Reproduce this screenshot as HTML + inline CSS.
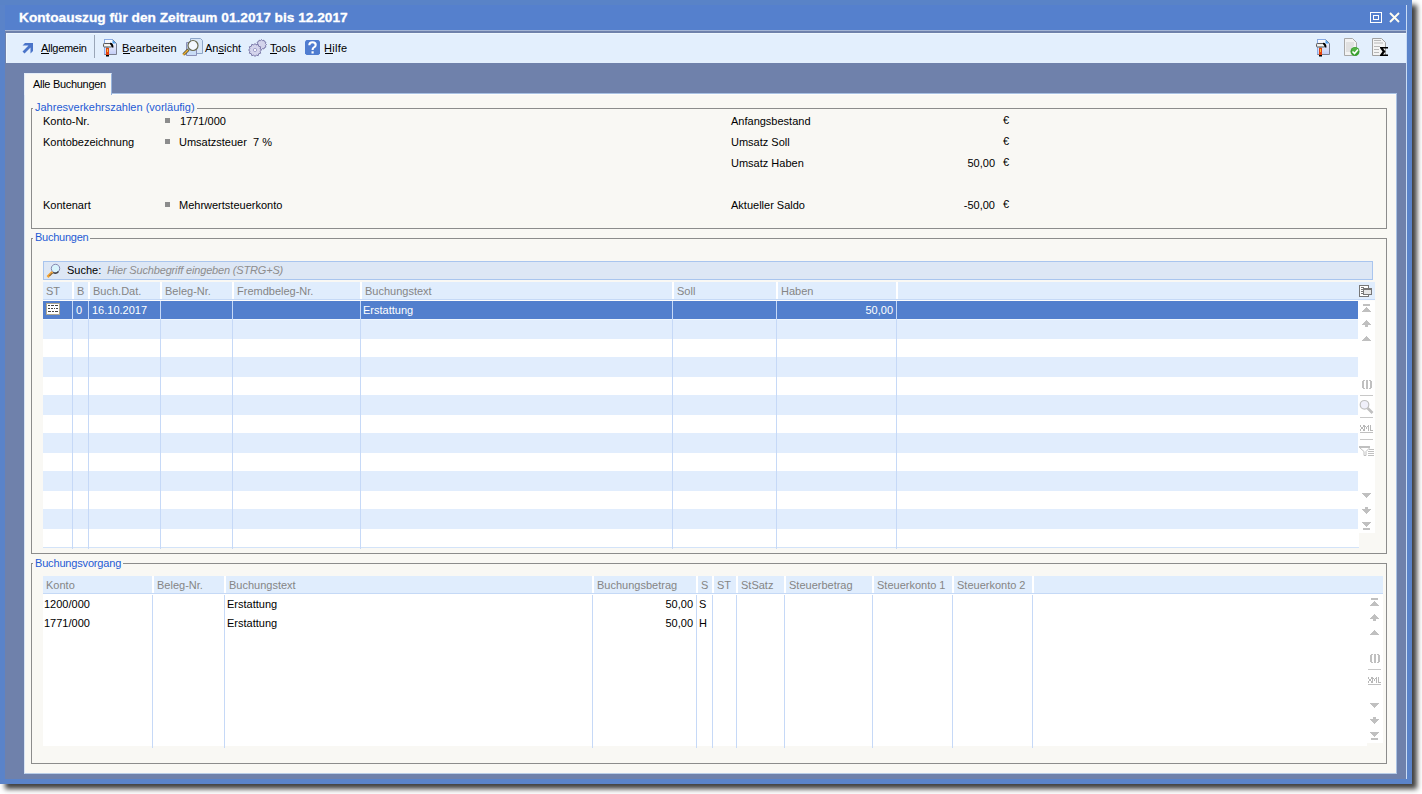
<!DOCTYPE html>
<html><head><meta charset="utf-8">
<style>
*{margin:0;padding:0;box-sizing:border-box}
html,body{width:1422px;height:794px;overflow:hidden;background:#fff;font-family:"Liberation Sans",sans-serif;font-size:11px;color:#000}
.a{position:absolute}
.t{position:absolute;white-space:pre;line-height:13px;margin-top:1px}
#win{left:0;top:0;width:1412px;height:784px;background:#5a83c9;box-shadow:5px 5px 5px rgba(0,0,0,.75)}
#topband{left:0;top:0;width:1412px;height:5px;background:#5983c7}
#title{left:5px;top:5px;width:1401px;height:25px;background:#5580cd}
#titletext{left:19px;top:9px;font-weight:bold;font-size:13.7px;color:#fff;line-height:16px;-webkit-text-stroke:0.3px #fff}
#tline1{left:5px;top:30px;width:1401px;height:1px;background:#a3b4d4}
#tline2{left:5px;top:31px;width:1401px;height:2px;background:#6f81ab}
#toolbar{left:5px;top:33px;width:1401px;height:30px;background:#e3effd;border-left:1px solid #6f81ab;box-shadow:inset 1px 1px 0 #eef7fe}
#client{left:5px;top:63px;width:1401px;height:716px;background:#6f81ab}
#rline{left:1406px;top:5px;width:1px;height:774px;background:#c9dcf6}
.u{text-decoration:underline}
#tab{left:24px;top:73px;width:88px;height:22px;background:#f9f8f4;border-left:1px solid #e4edf8;border-top:1px solid #e4edf8;border-right:1px solid #98b4dc}
#panel{left:24px;top:93px;width:1373px;height:681px;background:#f9f8f4;border-left:1px solid #d8e4f4;border-bottom:1px solid #b9cde8;border-top:1px solid #a9c1e3;border-right:1px solid #a9c1e3;box-shadow:inset 0 1px 0 #fdfdfb}
.gb{position:absolute;border:1px solid #8c8c8c}
.leg{position:absolute;color:#1f5bd4;background:#f9f8f4;padding:0 2px;line-height:13px;margin-top:1px;letter-spacing:-0.25px}
.hd{color:#858585}
.sq{position:absolute;width:5px;height:5px;background:#8c8c8c}
</style></head><body>
<div id="win" class="a"></div>
<div id="topband" class="a"></div>
<div id="title" class="a"></div>
<div id="titletext" class="t">Kontoauszug für den Zeitraum 01.2017 bis 12.2017</div>
<div id="tline1" class="a"></div>
<div id="tline2" class="a"></div>
<div id="toolbar" class="a"></div>
<div id="client" class="a"></div>
<div id="rline" class="a"></div>

<!-- toolbar items -->
<div class="t" style="left:41px;top:41px;letter-spacing:-0.3px">Allgemein</div>
<div class="a" style="left:94px;top:35px;width:1px;height:23px;background:#9aa6b8"></div>
<div class="t" style="left:122px;top:41px;letter-spacing:0.15px">Bearbeiten</div>
<div class="t" style="left:205px;top:41px">Ansicht</div>
<div class="t" style="left:270px;top:41px">Tools</div>
<div class="t" style="left:324px;top:41px;letter-spacing:0.3px">Hilfe</div>

<div id="panel" class="a"></div>
<div id="tab" class="a"></div>
<div class="t" style="left:33px;top:77px;letter-spacing:-0.3px">Alle Buchungen</div>

<!-- group 1 -->
<div class="gb" style="left:31px;top:108px;width:1356px;height:121px"></div>
<div class="leg" style="left:33px;top:100px;letter-spacing:0">Jahresverkehrszahlen (vorläufig)</div>


<div class="t" style="left:43px;top:114px">Konto-Nr.</div>
<div class="t" style="left:43px;top:135px">Kontobezeichnung</div>
<div class="t" style="left:43px;top:198px">Kontenart</div>
<div class="sq" style="left:165px;top:118px"></div>
<div class="sq" style="left:165px;top:139px"></div>
<div class="sq" style="left:165px;top:202px"></div>
<div class="t" style="left:180px;top:114px">1771/000</div>
<div class="t" style="left:179px;top:135px">Umsatzsteuer  7 %</div>
<div class="t" style="left:179px;top:198px">Mehrwertsteuerkonto</div>
<div class="t" style="left:731px;top:114px">Anfangsbestand</div>
<div class="t" style="left:731px;top:135px">Umsatz Soll</div>
<div class="t" style="left:731px;top:156px">Umsatz Haben</div>
<div class="t" style="left:731px;top:198px">Aktueller Saldo</div>
<div class="t" style="left:1003px;top:113px">€</div>
<div class="t" style="left:1003px;top:134px">€</div>
<div class="t" style="left:1003px;top:155px">€</div>
<div class="t" style="left:1003px;top:197px">€</div>
<div class="t" style="right:427px;top:156px">50,00</div>
<div class="t" style="right:427px;top:198px">-50,00</div>

<!-- group 2 -->
<div class="gb" style="left:31px;top:238px;width:1356px;height:316px"></div>
<div class="leg" style="left:33px;top:230px">Buchungen</div>
<div class="a" style="left:43px;top:261px;width:1330px;height:19px;background:#dde7f5;border:1px solid #a9c5ee"></div>
<div class="t" style="left:67px;top:263px">Suche:</div>
<div class="t" style="left:107px;top:263px;font-style:italic;color:#8d8d8d;letter-spacing:-0.17px">Hier Suchbegriff eingeben (STRG+S)</div>


<div class="a" style="left:43px;top:282px;width:1332px;height:17px;background:#e0edfd"></div>
<div class="a" style="left:43px;top:299px;width:1332px;height:1px;background:#c5d9f6"></div>
<div class="a" style="left:43px;top:300px;width:1332px;height:1px;background:#fdfdfd"></div>
<div class="a" style="left:43px;top:301px;width:1316px;height:246px;background:#fff"></div>
<div class="a" style="left:1358px;top:301px;width:17px;height:232px;background:#fff"></div>
<div class="a" style="left:43px;top:301px;width:1315px;height:18px;background:#527fcd"></div>
<div class="a" style="left:43px;top:319px;width:1315px;height:20px;background:#e1edfd"></div>
<div class="a" style="left:43px;top:357px;width:1315px;height:20px;background:#e1edfd"></div>
<div class="a" style="left:43px;top:395px;width:1315px;height:20px;background:#e1edfd"></div>
<div class="a" style="left:43px;top:433px;width:1315px;height:20px;background:#e1edfd"></div>
<div class="a" style="left:43px;top:471px;width:1315px;height:20px;background:#e1edfd"></div>
<div class="a" style="left:43px;top:509px;width:1315px;height:20px;background:#e1edfd"></div>
<div class="a" style="left:43px;top:319px;width:1315px;height:1px;background:#eef6fe"></div>
<div class="a" style="left:43px;top:547px;width:1316px;height:1px;background:#d3e3f8"></div>
<div class="a" style="left:72px;top:282px;width:2px;height:17px;background:#fff"></div>
<div class="a" style="left:72px;top:301px;width:1px;height:248px;background:#c6d9f7"></div>
<div class="a" style="left:88px;top:282px;width:2px;height:17px;background:#fff"></div>
<div class="a" style="left:88px;top:301px;width:1px;height:248px;background:#c6d9f7"></div>
<div class="a" style="left:160px;top:282px;width:2px;height:17px;background:#fff"></div>
<div class="a" style="left:160px;top:301px;width:1px;height:248px;background:#c6d9f7"></div>
<div class="a" style="left:232px;top:282px;width:2px;height:17px;background:#fff"></div>
<div class="a" style="left:232px;top:301px;width:1px;height:248px;background:#c6d9f7"></div>
<div class="a" style="left:360px;top:282px;width:2px;height:17px;background:#fff"></div>
<div class="a" style="left:360px;top:301px;width:1px;height:248px;background:#c6d9f7"></div>
<div class="a" style="left:672px;top:282px;width:2px;height:17px;background:#fff"></div>
<div class="a" style="left:672px;top:301px;width:1px;height:248px;background:#c6d9f7"></div>
<div class="a" style="left:776px;top:282px;width:2px;height:17px;background:#fff"></div>
<div class="a" style="left:776px;top:301px;width:1px;height:248px;background:#c6d9f7"></div>
<div class="a" style="left:896px;top:282px;width:2px;height:17px;background:#fff"></div>
<div class="a" style="left:896px;top:301px;width:1px;height:248px;background:#c6d9f7"></div>
<div class="t hd" style="left:46px;top:284px">ST</div>
<div class="t hd" style="left:77px;top:284px">B</div>
<div class="t hd" style="left:93px;top:284px">Buch.Dat.</div>
<div class="t hd" style="left:165px;top:284px">Beleg-Nr.</div>
<div class="t hd" style="left:237px;top:284px">Fremdbeleg-Nr.</div>
<div class="t hd" style="left:365px;top:284px">Buchungstext</div>
<div class="t hd" style="left:677px;top:284px">Soll</div>
<div class="t hd" style="left:781px;top:284px">Haben</div>
<div class="t" style="left:76px;top:303px;color:#fff">0</div>
<div class="t" style="left:92px;top:303px;color:#fff">16.10.2017</div>
<div class="t" style="left:363px;top:303px;color:#fff">Erstattung</div>
<div class="t" style="right:529px;top:303px;color:#fff">50,00</div>
<div class="gb" style="left:31px;top:563px;width:1356px;height:201px"></div>
<div class="leg" style="left:33px;top:556px;letter-spacing:-0.17px">Buchungsvorgang</div>
<div class="a" style="left:43px;top:576px;width:1340px;height:17px;background:#e0edfd"></div>
<div class="a" style="left:43px;top:593px;width:1340px;height:1px;background:#c5d9f6"></div>
<div class="a" style="left:43px;top:594px;width:1340px;height:152px;background:#fff"></div>
<div class="a" style="left:1367px;top:743px;width:16px;height:3px;background:#f9f8f4"></div>
<div class="a" style="left:152px;top:576px;width:2px;height:17px;background:#fff"></div>
<div class="a" style="left:152px;top:595px;width:1px;height:153px;background:#c6d9f7"></div>
<div class="a" style="left:224px;top:576px;width:2px;height:17px;background:#fff"></div>
<div class="a" style="left:224px;top:595px;width:1px;height:153px;background:#c6d9f7"></div>
<div class="a" style="left:592px;top:576px;width:2px;height:17px;background:#fff"></div>
<div class="a" style="left:592px;top:595px;width:1px;height:153px;background:#c6d9f7"></div>
<div class="a" style="left:696px;top:576px;width:2px;height:17px;background:#fff"></div>
<div class="a" style="left:696px;top:595px;width:1px;height:153px;background:#c6d9f7"></div>
<div class="a" style="left:712px;top:576px;width:2px;height:17px;background:#fff"></div>
<div class="a" style="left:712px;top:595px;width:1px;height:153px;background:#c6d9f7"></div>
<div class="a" style="left:736px;top:576px;width:2px;height:17px;background:#fff"></div>
<div class="a" style="left:736px;top:595px;width:1px;height:153px;background:#c6d9f7"></div>
<div class="a" style="left:784px;top:576px;width:2px;height:17px;background:#fff"></div>
<div class="a" style="left:784px;top:595px;width:1px;height:153px;background:#c6d9f7"></div>
<div class="a" style="left:872px;top:576px;width:2px;height:17px;background:#fff"></div>
<div class="a" style="left:872px;top:595px;width:1px;height:153px;background:#c6d9f7"></div>
<div class="a" style="left:952px;top:576px;width:2px;height:17px;background:#fff"></div>
<div class="a" style="left:952px;top:595px;width:1px;height:153px;background:#c6d9f7"></div>
<div class="a" style="left:1032px;top:576px;width:2px;height:17px;background:#fff"></div>
<div class="a" style="left:1032px;top:595px;width:1px;height:153px;background:#c6d9f7"></div>
<div class="t hd" style="left:46px;top:578px">Konto</div>
<div class="t hd" style="left:157px;top:578px">Beleg-Nr.</div>
<div class="t hd" style="left:229px;top:578px">Buchungstext</div>
<div class="t hd" style="left:597px;top:578px">Buchungsbetrag</div>
<div class="t hd" style="left:701px;top:578px">S</div>
<div class="t hd" style="left:717px;top:578px">ST</div>
<div class="t hd" style="left:741px;top:578px">StSatz</div>
<div class="t hd" style="left:789px;top:578px">Steuerbetrag</div>
<div class="t hd" style="left:877px;top:578px">Steuerkonto 1</div>
<div class="t hd" style="left:957px;top:578px">Steuerkonto 2</div>
<div class="t" style="left:44px;top:597px">1200/000</div>
<div class="t" style="left:227px;top:597px">Erstattung</div>
<div class="t" style="right:729px;top:597px">50,00</div>
<div class="t" style="left:699px;top:597px">S</div>
<div class="t" style="left:44px;top:616px">1771/000</div>
<div class="t" style="left:227px;top:616px">Erstattung</div>
<div class="t" style="right:729px;top:616px">50,00</div>
<div class="t" style="left:699px;top:616px">H</div>
<!-- ICONS -->
<!-- title buttons -->
<div class="a" style="left:1370px;top:12px;width:12px;height:11px;border:1px solid #fff"></div>
<div class="a" style="left:1373px;top:15px;width:6px;height:5px;border:1px solid #fff"></div>
<svg class="a" style="left:1389px;top:12px" width="11" height="11" viewBox="0 0 11 11"><path d="M1 1 L10 10 M10 1 L1 10" stroke="#fffdf0" stroke-width="1.9"/></svg>
<!-- toolbar underlines -->
<div class="a" style="left:41px;top:53px;width:8px;height:1px;background:#000"></div>
<div class="a" style="left:123px;top:53px;width:7px;height:1px;background:#000"></div>
<div class="a" style="left:218px;top:53px;width:6px;height:1px;background:#000"></div>
<div class="a" style="left:270px;top:53px;width:7px;height:1px;background:#000"></div>
<div class="a" style="left:325px;top:53px;width:8px;height:1px;background:#000"></div>
<!-- arrow -->
<svg class="a" style="left:22px;top:42px" width="12" height="12" viewBox="0 0 12 12"><path d="M3 1 H11 V9 L8.5 11.5 V5.5 L2.5 11.5 L0.5 9.5 L6.5 3.5 H0.5 Z" fill="#4a74c9"/></svg>
<!-- hammer doc -->
<svg class="a" style="left:102px;top:38px" width="16" height="19" viewBox="0 0 16 19"><defs><linearGradient id="hg1" x1="0" y1="0" x2="0" y2="1"><stop offset="0" stop-color="#fff"/><stop offset="1" stop-color="#c2ccf6"/></linearGradient></defs><path d="M2.5 1.5 H10.5 L14.5 5.5 V16.5 H2.5 Z" fill="url(#hg1)" stroke="#7a7f90"/><path d="M2.5 16 V1.5 H10.5" fill="none" stroke="#88aae6"/><path d="M10.5 2 V5.5 H14" fill="#4aa0f0"/><rect x="1.5" y="5.5" width="8" height="3.5" rx="0.8" fill="#e8e8e8" stroke="#5a5a5a"/><path d="M3 7.2 H8" stroke="#fff"/><path d="M8 5.7 Q10.6 5.7 10.6 9.6" stroke="#000" stroke-width="1.8" fill="none"/><rect x="4" y="9" width="2.5" height="1" fill="#808080"/><rect x="4" y="10" width="3" height="7" fill="#e2420e"/><rect x="5" y="11" width="1" height="3" fill="#f8c040"/><rect x="4" y="17" width="3" height="1.5" fill="#000"/></svg>
<!-- ansicht -->
<svg class="a" style="left:181px;top:37px" width="24" height="21" viewBox="0 0 24 21"><path d="M9.5 1.5 H19.5 L21.5 3.5 V16.5 H9.5 Z" fill="#d8e6f8" stroke="#8ea6c8"/><path d="M5.5 5.5 H15.5 V18.5 H5.5 Z" fill="#c8dcf6" stroke="#8a8fb8"/><circle cx="12" cy="8.5" r="5" fill="#f4f8ff" stroke="#6a6a50" stroke-width="1.2"/><path d="M7.5 12.5 L2.5 17.5" stroke="#50503a" stroke-width="3"/><path d="M7 13 L2 18" stroke="#f0b030" stroke-width="1.5"/></svg>
<!-- gears -->
<svg class="a" style="left:247px;top:38px" width="21" height="19" viewBox="0 0 21 19">
<g fill="#d4d4ec" stroke="#7c7aaa" stroke-width="1">
<path d="M14.5 1.5 l1 1.2 1.5-.5 .4 1.5 1.5.4 -.5 1.5 1.2 1 -1.2 1 .5 1.5 -1.5.4 -.4 1.5 -1.5-.5 -1 1.2 -1-1.2 -1.5.5 -.4-1.5 -1.5-.4 .5-1.5 -1.2-1 1.2-1 -.5-1.5 1.5-.4 .4-1.5 1.5.5 z"/>
<path d="M8 5.5 l1.3 1.5 1.9-.7 .5 2 2 .5 -.7 1.9 1.5 1.3 -1.5 1.3 .7 1.9 -2 .5 -.5 2 -1.9-.7 -1.3 1.5 -1.3-1.5 -1.9.7 -.5-2 -2-.5 .7-1.9 -1.5-1.3 1.5-1.3 -.7-1.9 2-.5 .5-2 1.9.7 z"/>
</g><circle cx="8" cy="12" r="1.6" fill="#fff" stroke="#9090c0" stroke-width=".8"/></svg>
<!-- help -->
<svg class="a" style="left:304px;top:39px" width="17" height="17" viewBox="0 0 17 17"><path d="M2.5 1 H14.5 L16 2.5 V14.5 L14.5 16 H2.5 L1 14.5 V2.5 Z" fill="#4f7cd0"/><path d="M5.3 6.2 Q5.3 3.2 8.5 3.2 Q11.7 3.2 11.7 5.9 Q11.7 7.6 9.6 8.6 Q8.6 9.1 8.6 11" fill="none" stroke="#fff" stroke-width="2.1"/><rect x="7.5" y="12.3" width="2.2" height="2.2" fill="#fff"/></svg>
<!-- right toolbar: hammer doc -->
<svg class="a" style="left:1315px;top:38px" width="16" height="19" viewBox="0 0 16 19"><defs><linearGradient id="hg2" x1="0" y1="0" x2="0" y2="1"><stop offset="0" stop-color="#fff"/><stop offset="1" stop-color="#c2ccf6"/></linearGradient></defs><path d="M2.5 1.5 H10.5 L14.5 5.5 V16.5 H2.5 Z" fill="url(#hg2)" stroke="#7a7f90"/><path d="M2.5 16 V1.5 H10.5" fill="none" stroke="#88aae6"/><path d="M10.5 2 V5.5 H14" fill="#4aa0f0"/><rect x="1.5" y="5.5" width="8" height="3.5" rx="0.8" fill="#e8e8e8" stroke="#5a5a5a"/><path d="M3 7.2 H8" stroke="#fff"/><path d="M8 5.7 Q10.6 5.7 10.6 9.6" stroke="#000" stroke-width="1.8" fill="none"/><rect x="4" y="9" width="2.5" height="1" fill="#808080"/><rect x="4" y="10" width="3" height="7" fill="#e2420e"/><rect x="5" y="11" width="1" height="3" fill="#f8c040"/><rect x="4" y="17" width="3" height="1.5" fill="#000"/></svg>
<!-- doc check -->
<svg class="a" style="left:1343px;top:37px" width="18" height="20" viewBox="0 0 18 20"><path d="M1.5 1.5 H9.5 L13.5 5.5 V18.5 H1.5 Z" fill="#f2f2f2" stroke="#a8a8a8"/><path d="M3 6 H11 M3 8 H11 M3 10 H10 M3 12 H9 M3 14 H8" stroke="#d0d0d0"/><circle cx="12" cy="14.5" r="4.5" fill="#3aa030"/><circle cx="12" cy="13.5" r="3" fill="#60c050" opacity=".6"/><path d="M9.5 14.5 L11.5 16.5 L15 12.5" fill="none" stroke="#fff" stroke-width="1.6"/></svg>
<!-- doc sigma -->
<svg class="a" style="left:1371px;top:37px" width="18" height="20" viewBox="0 0 18 20"><path d="M1.5 1.5 H10.5 L14.5 5.5 V18.5 H1.5 Z" fill="#f4f4f4" stroke="#a0a0a0"/><path d="M3 3.5 H10 M3 6 H12 M3 9.5 H9 M3 12.5 H8 M3 15.5 H8" stroke="#b8b8b8"/><path d="M9 10 H17 V11.5 H12 L14.5 14.5 L12 17.5 H17 V19 H9 V18 L11.5 14.5 L9 11 Z" fill="#000"/></svg>
<!-- search magnifier -->
<svg class="a" style="left:45px;top:263px" width="16" height="16" viewBox="0 0 16 16"><circle cx="10.5" cy="5.5" r="4.2" fill="#d8f4fc" stroke="#7a7aa8" stroke-width="0.9"/><path d="M13.5 8.5 A4.2 4.2 0 0 1 8 9.5" fill="none" stroke="#404040" stroke-width="1.3"/><path d="M7.5 9 L2.5 14" stroke="#f0a030" stroke-width="2.5"/><path d="M7.5 10 L4.5 13" stroke="#505050" stroke-width="1"/></svg>
<!-- row icon -->
<svg class="a" style="left:46px;top:303px" width="14" height="12" viewBox="0 0 14 12"><rect x="0.5" y="0.5" width="13" height="11" fill="#fff" stroke="#b0a890"/><path d="M2 2.5 H4 M5 2.5 H8 M9 2.5 H12 M2 5.5 H4 M5 5.5 H7 M8 5.5 H9 M10 5.5 H12 M2 8.5 H5 M6 8.5 H8 M9 8.5 H12" stroke="#444" stroke-width="1"/></svg>
<!-- column chooser -->
<svg class="a" style="left:1358px;top:284px" width="15" height="14" viewBox="0 0 15 14"><rect x="1.5" y="1.5" width="9" height="11" fill="#fff" stroke="#777"/><path d="M3 3.5 H6 M3 5.5 H5 M3 7.5 H5 M3 9.5 H5" stroke="#777"/><rect x="5.5" y="4.5" width="8" height="6" fill="#e6e6e6" stroke="#777"/><path d="M6 5.5 H13" stroke="#777"/></svg>
<!-- /ICONS -->
<svg class="a" style="left:1356px;top:300px" width="22" height="235" viewBox="1356 300 22 235"><rect x="1363" y="304" width="7" height="2" fill="#c0c0c0"/><rect x="1366" y="307" width="1" height="1" fill="#c0c0c0"/><rect x="1365" y="308" width="3" height="1" fill="#c0c0c0"/><rect x="1364" y="309" width="5" height="1" fill="#c0c0c0"/><rect x="1363" y="310" width="7" height="1" fill="#c0c0c0"/><rect x="1362" y="311" width="9" height="1" fill="#c0c0c0"/><rect x="1366" y="320" width="1" height="1" fill="#c0c0c0"/><rect x="1365" y="321" width="3" height="1" fill="#c0c0c0"/><rect x="1364" y="322" width="5" height="1" fill="#c0c0c0"/><rect x="1363" y="323" width="7" height="1" fill="#c0c0c0"/><rect x="1362" y="324" width="9" height="1" fill="#c0c0c0"/><rect x="1365" y="325" width="3" height="2" fill="#c0c0c0"/><rect x="1366" y="336" width="1" height="1" fill="#c0c0c0"/><rect x="1365" y="337" width="3" height="1" fill="#c0c0c0"/><rect x="1364" y="338" width="5" height="1" fill="#c0c0c0"/><rect x="1363" y="339" width="7" height="1" fill="#c0c0c0"/><rect x="1362" y="340" width="9" height="1" fill="#c0c0c0"/><rect x="1362" y="381" width="2" height="7" fill="#c0c0c0"/><rect x="1363" y="380" width="2" height="1" fill="#c0c0c0"/><rect x="1363" y="388" width="2" height="1" fill="#c0c0c0"/><rect x="1366" y="380" width="2" height="9" fill="#c0c0c0"/><rect x="1370" y="381" width="2" height="7" fill="#c0c0c0"/><rect x="1369" y="380" width="2" height="1" fill="#c0c0c0"/><rect x="1369" y="388" width="2" height="1" fill="#c0c0c0"/><rect x="1360" y="395" width="13" height="1" fill="#c8c8c8"/><circle cx="1364.5" cy="404.8" r="4.3" fill="#f0f0fa" stroke="#c0c0c0" stroke-width="1.2"/><path d="M1367.5 408 L1372.5 413" stroke="#c0c0c0" stroke-width="2.6"/><rect x="1360" y="417" width="13" height="1" fill="#c8c8c8"/><rect x="1360" y="425" width="1" height="1" fill="#b8b8b8"/><rect x="1363" y="425" width="1" height="1" fill="#b8b8b8"/><rect x="1360" y="426" width="1" height="1" fill="#b8b8b8"/><rect x="1363" y="426" width="1" height="1" fill="#b8b8b8"/><rect x="1361" y="427" width="1" height="1" fill="#b8b8b8"/><rect x="1362" y="427" width="1" height="1" fill="#b8b8b8"/><rect x="1361" y="428" width="1" height="1" fill="#b8b8b8"/><rect x="1362" y="428" width="1" height="1" fill="#b8b8b8"/><rect x="1360" y="429" width="1" height="1" fill="#b8b8b8"/><rect x="1363" y="429" width="1" height="1" fill="#b8b8b8"/><rect x="1360" y="430" width="1" height="1" fill="#b8b8b8"/><rect x="1363" y="430" width="1" height="1" fill="#b8b8b8"/><rect x="1364" y="425" width="1" height="1" fill="#b8b8b8"/><rect x="1368" y="425" width="1" height="1" fill="#b8b8b8"/><rect x="1364" y="426" width="1" height="1" fill="#b8b8b8"/><rect x="1365" y="426" width="1" height="1" fill="#b8b8b8"/><rect x="1367" y="426" width="1" height="1" fill="#b8b8b8"/><rect x="1368" y="426" width="1" height="1" fill="#b8b8b8"/><rect x="1364" y="427" width="1" height="1" fill="#b8b8b8"/><rect x="1366" y="427" width="1" height="1" fill="#b8b8b8"/><rect x="1368" y="427" width="1" height="1" fill="#b8b8b8"/><rect x="1364" y="428" width="1" height="1" fill="#b8b8b8"/><rect x="1366" y="428" width="1" height="1" fill="#b8b8b8"/><rect x="1368" y="428" width="1" height="1" fill="#b8b8b8"/><rect x="1364" y="429" width="1" height="1" fill="#b8b8b8"/><rect x="1368" y="429" width="1" height="1" fill="#b8b8b8"/><rect x="1364" y="430" width="1" height="1" fill="#b8b8b8"/><rect x="1368" y="430" width="1" height="1" fill="#b8b8b8"/><rect x="1370" y="425" width="1" height="1" fill="#b8b8b8"/><rect x="1370" y="426" width="1" height="1" fill="#b8b8b8"/><rect x="1370" y="427" width="1" height="1" fill="#b8b8b8"/><rect x="1370" y="428" width="1" height="1" fill="#b8b8b8"/><rect x="1370" y="429" width="1" height="1" fill="#b8b8b8"/><rect x="1370" y="430" width="1" height="1" fill="#b8b8b8"/><rect x="1371" y="430" width="1" height="1" fill="#b8b8b8"/><rect x="1372" y="430" width="1" height="1" fill="#b8b8b8"/><rect x="1360" y="432" width="13" height="1" fill="#c0c0c0"/><rect x="1360" y="439" width="13" height="1" fill="#c8c8c8"/><rect x="1359" y="446" width="11" height="2" fill="#c0c0c0"/><path d="M1360 448 L1364 451.5 V455.5 H1366 V451.5 L1369.5 448" fill="none" stroke="#c0c0c0" stroke-width="1"/><rect x="1369" y="449" width="5" height="1" fill="#c0c0c0"/><rect x="1368" y="451" width="6" height="1" fill="#c0c0c0"/><rect x="1368" y="453" width="6" height="1" fill="#c0c0c0"/><rect x="1368" y="455" width="6" height="1" fill="#c0c0c0"/><rect x="1362" y="493" width="9" height="1" fill="#c0c0c0"/><rect x="1363" y="494" width="7" height="1" fill="#c0c0c0"/><rect x="1364" y="495" width="5" height="1" fill="#c0c0c0"/><rect x="1365" y="496" width="3" height="1" fill="#c0c0c0"/><rect x="1366" y="497" width="1" height="1" fill="#c0c0c0"/><rect x="1365" y="507" width="3" height="2" fill="#c0c0c0"/><rect x="1362" y="509" width="9" height="1" fill="#c0c0c0"/><rect x="1363" y="510" width="7" height="1" fill="#c0c0c0"/><rect x="1364" y="511" width="5" height="1" fill="#c0c0c0"/><rect x="1365" y="512" width="3" height="1" fill="#c0c0c0"/><rect x="1366" y="513" width="1" height="1" fill="#c0c0c0"/><rect x="1362" y="522" width="9" height="1" fill="#c0c0c0"/><rect x="1363" y="523" width="7" height="1" fill="#c0c0c0"/><rect x="1364" y="524" width="5" height="1" fill="#c0c0c0"/><rect x="1365" y="525" width="3" height="1" fill="#c0c0c0"/><rect x="1366" y="526" width="1" height="1" fill="#c0c0c0"/><rect x="1363" y="528" width="7" height="2" fill="#c0c0c0"/></svg>
<svg class="a" style="left:1364px;top:594px" width="22" height="150" viewBox="1364 594 22 150"><rect x="1371" y="598" width="7" height="2" fill="#c0c0c0"/><rect x="1374" y="601" width="1" height="1" fill="#c0c0c0"/><rect x="1373" y="602" width="3" height="1" fill="#c0c0c0"/><rect x="1372" y="603" width="5" height="1" fill="#c0c0c0"/><rect x="1371" y="604" width="7" height="1" fill="#c0c0c0"/><rect x="1370" y="605" width="9" height="1" fill="#c0c0c0"/><rect x="1374" y="614" width="1" height="1" fill="#c0c0c0"/><rect x="1373" y="615" width="3" height="1" fill="#c0c0c0"/><rect x="1372" y="616" width="5" height="1" fill="#c0c0c0"/><rect x="1371" y="617" width="7" height="1" fill="#c0c0c0"/><rect x="1370" y="618" width="9" height="1" fill="#c0c0c0"/><rect x="1373" y="619" width="3" height="2" fill="#c0c0c0"/><rect x="1374" y="630" width="1" height="1" fill="#c0c0c0"/><rect x="1373" y="631" width="3" height="1" fill="#c0c0c0"/><rect x="1372" y="632" width="5" height="1" fill="#c0c0c0"/><rect x="1371" y="633" width="7" height="1" fill="#c0c0c0"/><rect x="1370" y="634" width="9" height="1" fill="#c0c0c0"/><rect x="1370" y="655" width="2" height="7" fill="#c0c0c0"/><rect x="1371" y="654" width="2" height="1" fill="#c0c0c0"/><rect x="1371" y="662" width="2" height="1" fill="#c0c0c0"/><rect x="1374" y="654" width="2" height="9" fill="#c0c0c0"/><rect x="1378" y="655" width="2" height="7" fill="#c0c0c0"/><rect x="1377" y="654" width="2" height="1" fill="#c0c0c0"/><rect x="1377" y="662" width="2" height="1" fill="#c0c0c0"/><rect x="1368" y="669" width="13" height="1" fill="#c8c8c8"/><rect x="1368" y="677" width="1" height="1" fill="#b8b8b8"/><rect x="1371" y="677" width="1" height="1" fill="#b8b8b8"/><rect x="1368" y="678" width="1" height="1" fill="#b8b8b8"/><rect x="1371" y="678" width="1" height="1" fill="#b8b8b8"/><rect x="1369" y="679" width="1" height="1" fill="#b8b8b8"/><rect x="1370" y="679" width="1" height="1" fill="#b8b8b8"/><rect x="1369" y="680" width="1" height="1" fill="#b8b8b8"/><rect x="1370" y="680" width="1" height="1" fill="#b8b8b8"/><rect x="1368" y="681" width="1" height="1" fill="#b8b8b8"/><rect x="1371" y="681" width="1" height="1" fill="#b8b8b8"/><rect x="1368" y="682" width="1" height="1" fill="#b8b8b8"/><rect x="1371" y="682" width="1" height="1" fill="#b8b8b8"/><rect x="1372" y="677" width="1" height="1" fill="#b8b8b8"/><rect x="1376" y="677" width="1" height="1" fill="#b8b8b8"/><rect x="1372" y="678" width="1" height="1" fill="#b8b8b8"/><rect x="1373" y="678" width="1" height="1" fill="#b8b8b8"/><rect x="1375" y="678" width="1" height="1" fill="#b8b8b8"/><rect x="1376" y="678" width="1" height="1" fill="#b8b8b8"/><rect x="1372" y="679" width="1" height="1" fill="#b8b8b8"/><rect x="1374" y="679" width="1" height="1" fill="#b8b8b8"/><rect x="1376" y="679" width="1" height="1" fill="#b8b8b8"/><rect x="1372" y="680" width="1" height="1" fill="#b8b8b8"/><rect x="1374" y="680" width="1" height="1" fill="#b8b8b8"/><rect x="1376" y="680" width="1" height="1" fill="#b8b8b8"/><rect x="1372" y="681" width="1" height="1" fill="#b8b8b8"/><rect x="1376" y="681" width="1" height="1" fill="#b8b8b8"/><rect x="1372" y="682" width="1" height="1" fill="#b8b8b8"/><rect x="1376" y="682" width="1" height="1" fill="#b8b8b8"/><rect x="1378" y="677" width="1" height="1" fill="#b8b8b8"/><rect x="1378" y="678" width="1" height="1" fill="#b8b8b8"/><rect x="1378" y="679" width="1" height="1" fill="#b8b8b8"/><rect x="1378" y="680" width="1" height="1" fill="#b8b8b8"/><rect x="1378" y="681" width="1" height="1" fill="#b8b8b8"/><rect x="1378" y="682" width="1" height="1" fill="#b8b8b8"/><rect x="1379" y="682" width="1" height="1" fill="#b8b8b8"/><rect x="1380" y="682" width="1" height="1" fill="#b8b8b8"/><rect x="1368" y="684" width="13" height="1" fill="#c0c0c0"/><rect x="1370" y="703" width="9" height="1" fill="#c0c0c0"/><rect x="1371" y="704" width="7" height="1" fill="#c0c0c0"/><rect x="1372" y="705" width="5" height="1" fill="#c0c0c0"/><rect x="1373" y="706" width="3" height="1" fill="#c0c0c0"/><rect x="1374" y="707" width="1" height="1" fill="#c0c0c0"/><rect x="1373" y="717" width="3" height="2" fill="#c0c0c0"/><rect x="1370" y="719" width="9" height="1" fill="#c0c0c0"/><rect x="1371" y="720" width="7" height="1" fill="#c0c0c0"/><rect x="1372" y="721" width="5" height="1" fill="#c0c0c0"/><rect x="1373" y="722" width="3" height="1" fill="#c0c0c0"/><rect x="1374" y="723" width="1" height="1" fill="#c0c0c0"/><rect x="1370" y="732" width="9" height="1" fill="#c0c0c0"/><rect x="1371" y="733" width="7" height="1" fill="#c0c0c0"/><rect x="1372" y="734" width="5" height="1" fill="#c0c0c0"/><rect x="1373" y="735" width="3" height="1" fill="#c0c0c0"/><rect x="1374" y="736" width="1" height="1" fill="#c0c0c0"/><rect x="1371" y="738" width="7" height="2" fill="#c0c0c0"/></svg>
</body></html>
